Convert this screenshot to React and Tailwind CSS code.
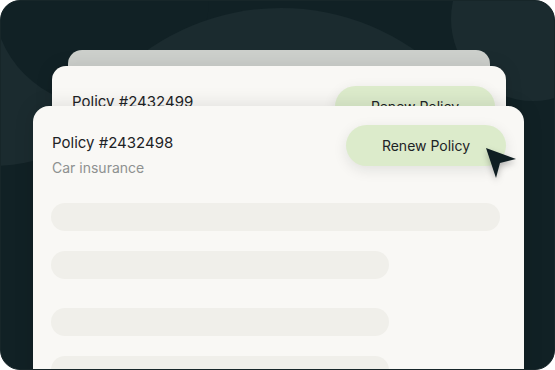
import React from 'react';

const bars = [
  { w: 'w-[449px]', mt: 'mt-0' },
  { w: 'w-[338px]', mt: 'mt-[20px]' },
  { w: 'w-[338px]', mt: 'mt-[29px]' },
  { w: 'w-[338px]', mt: 'mt-[20px]' },
];

function RenewButton() {
  return (
    <button className="w-[160px] h-[41px] shrink-0 rounded-full bg-[#dcebcb] text-[14px] leading-5 text-[#1d2326] shadow-[0_4px_14px_rgba(20,30,30,0.10)]">
      Renew Policy
    </button>
  );
}

function Cursor() {
  return (
    <svg
      className="absolute left-[478px] top-[140px] drop-shadow-[0_3px_3px_rgba(0,0,0,0.25)]"
      width="44"
      height="44"
      viewBox="0 0 44 44"
    >
      <polygon points="7,7 37,18 21,22 17,37" fill="#0f1e22" />
    </svg>
  );
}

export default function App() {
  return (
    <div className="w-[555px] h-[370px] bg-white" style={{ fontFamily: 'Inter, "Noto Sans", sans-serif' }}>
      <div className="relative w-[555px] h-[370px] overflow-hidden rounded-[20px] bg-[#112125] border border-[#172629]">
        {/* background shapes */}
        <div className="absolute left-[-173px] top-[-165px] w-[330px] h-[330px] rounded-full bg-[#1b2b2f]" />
        <div className="absolute left-[-8px] top-[-111px] w-[216px] h-[216px] rounded-full bg-[#112125]" />
        <div className="absolute left-[47px] top-[7px] w-[466px] h-[466px] rounded-full bg-[#1b2b2f]" />
        <div className="absolute left-[450px] top-[-64px] w-[164px] h-[164px] rounded-full bg-[#1b2b2f]" />

        <div className="relative flex flex-col pt-[49px]">
          {/* back card */}
          <div className="relative ml-[67px] w-[422px] h-[40px] rounded-[14px] bg-[#cdd0cc]" />

          {/* middle card */}
          <div className="relative ml-[51px] -mt-[24px] w-[454px] h-[70px] rounded-[14px] bg-[#f9f8f5] shadow-[0_0_18px_rgba(0,0,0,0.10)] flex justify-between pl-[20px] pr-[11px]">
            <div className="pt-[24px] text-[15px] leading-6 text-[#1d2326]">Policy #2432499</div>
            <div className="pt-[20px]">
              <RenewButton />
            </div>
          </div>

          {/* front card */}
          <div className="relative ml-[32px] -mt-[30px] w-[491px] h-[300px] rounded-t-[16px] bg-[#f9f8f5] shadow-[0_0_20px_rgba(0,0,0,0.12)] px-[18px]">
            <div className="flex justify-between items-start">
              <div className="pt-[25px] pl-[1px]">
                <div className="text-[15px] leading-6 text-[#1d2326]">Policy #2432498</div>
                <div className="mt-[3px] text-[14px] leading-5 text-[#8e9190]">Car insurance</div>
              </div>
              <div className="pt-[19px]">
                <RenewButton />
              </div>
            </div>
            <div className="mt-[25px] flex flex-col">
              {bars.map((b, i) => (
                <div key={i} className={`${b.w} ${b.mt} h-[28px] rounded-full bg-[#f0efea]`} />
              ))}
            </div>
          </div>
        </div>

        <Cursor />
      </div>
    </div>
  );
}
